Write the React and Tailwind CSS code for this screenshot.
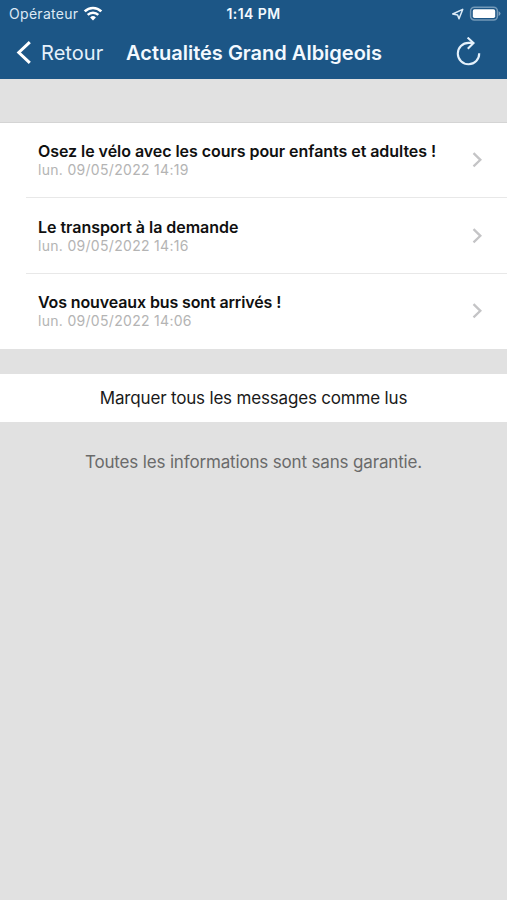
const messages = [
  { title: "Osez le vélo avec les cours pour enfants et adultes !", date: "lun. 09/05/2022 14:19", titleSpacing: "tracking-[-0.05px]" },
  { title: "Le transport à la demande", date: "lun. 09/05/2022 14:16", titleSpacing: "tracking-[-0.03px]" },
  { title: "Vos nouveaux bus sont arrivés !", date: "lun. 09/05/2022 14:06", titleSpacing: "tracking-[-0.12px]" },
];

function WifiIcon() {
  return (
    <svg className="ml-[5px] h-[15px] w-[20px]" viewBox="0 0 20 15" fill="none" stroke="white">
      <path d="M1.7 5.4A11.8 11.8 0 0 1 18.3 5.4" strokeWidth="2.7" />
      <path d="M4.7 8.9A7.5 7.5 0 0 1 15.3 8.9" strokeWidth="2.4" />
      <path d="M7.1 11.5A4.1 4.1 0 0 1 12.9 11.5L10 14.4Z" fill="white" stroke="none" />
    </svg>
  );
}

function StatusBar() {
  return (
    <div className="grid h-[27px] grid-cols-[1fr_auto_1fr] items-center text-[14px] leading-[27px]">
      <div className="flex items-center pl-[9px]">
        <span className="tracking-[0.3px] text-[#dce9f5]">Opérateur</span>
        <WifiIcon />
      </div>
      <span className="font-semibold tracking-[0.4px] text-[#f3f9ff]">1:14 PM</span>
      <div className="flex items-center justify-end pr-[6px]">
        <svg className="mr-[5px] h-[14px] w-[13px]" viewBox="0 0 13 14" fill="none" stroke="#dcebf7" strokeWidth="1.5" strokeLinejoin="round">
          <path d="M1.7 7 11.7 2.4 8 11.8 6.6 7.9Z" />
        </svg>
        <svg className="h-[16px] w-[32px]" viewBox="0 0 32 16" fill="none">
          <rect x="1.6" y="1.2" width="26.8" height="12.8" rx="3.8" stroke="#7399b8" strokeWidth="1.5" />
          <rect x="3.8" y="3.2" width="22.4" height="8.8" rx="1.7" fill="white" />
          <path d="M29.6 5.3Q31.5 6 31.5 7.6T29.6 9.9Z" fill="#7fa1bd" />
        </svg>
      </div>
    </div>
  );
}

function NavigationBar() {
  return (
    <div className="flex h-[51px] items-center pl-[16px] pr-[25px] text-[20px]">
      <button className="flex w-[110px] items-center">
        <svg className="h-[26px] w-[16px] shrink-0" viewBox="0 0 16 26" fill="none" stroke="white" strokeWidth="3">
          <path d="M13.8 2.1 2.8 12.5 13.8 22.9" />
        </svg>
        <span className="ml-[9px] tracking-[0.05px] text-[#e5f1fb]">Retour</span>
      </button>
      <h1 className="whitespace-nowrap font-semibold text-[#f3f9ff]">Actualités Grand Albigeois</h1>
      <button className="ml-auto">
        <svg className="h-[32px] w-[28px]" viewBox="0 0 28 32" fill="none" stroke="#e5f1fb" strokeWidth="2.1">
          <path d="M25.2 16.3A10.7 10.7 0 1 1 14.5 5.9H19" />
          <path d="M13.6 0.6 19.5 6.1 13.8 11.7" />
        </svg>
      </button>
    </div>
  );
}

function MessageRow({ message, last }) {
  return (
    <li className="flex h-[75.5px] pl-[26px]">
      <div className={last ? "flex flex-1 items-center pb-[2px] pl-[12px] pr-[25px]" : "flex flex-1 items-center border-b border-[#e8e8e8] pl-[12px] pr-[25px]"}>
        <div className="flex-1 pt-[2px]">
          <h2 className={`whitespace-nowrap text-[16px] font-semibold leading-[19px] text-[#101010] ${message.titleSpacing}`}>{message.title}</h2>
          <p className="text-[14px] leading-[18px] tracking-[0.3px] text-[#b4b4b4]">{message.date}</p>
        </div>
        <svg className="mt-px h-[18px] w-[12px]" viewBox="0 0 12 18" fill="none" stroke="#c4c4c6" strokeWidth="2.3">
          <path d="M3.5 2.2 10.4 8.8 3.5 15.4" />
        </svg>
      </div>
    </li>
  );
}

export default function App() {
  return (
    <main className="h-[900px] w-full overflow-hidden bg-[#e1e1e1] font-['Inter',sans-serif]">
      <header className="h-[79px] bg-[#1c5686] text-white">
        <StatusBar />
        <NavigationBar />
      </header>
      <ul className="mt-[42.5px] h-[227px] overflow-hidden border-t border-[#d4d4d4] bg-white">
        {messages.map((message, index) => (
          <MessageRow key={message.date} message={message} last={index === messages.length - 1} />
        ))}
      </ul>
      <button className="mt-[25.5px] block h-[48px] w-full bg-white pt-px text-[17px] tracking-[-0.18px] text-[#1a1a1a]">Marquer tous les messages comme lus</button>
      <p className="mt-[28px] text-center text-[17px] leading-[24px] tracking-[-0.16px] text-[#6a6a6a]">Toutes les informations sont sans garantie.</p>
    </main>
  );
}
